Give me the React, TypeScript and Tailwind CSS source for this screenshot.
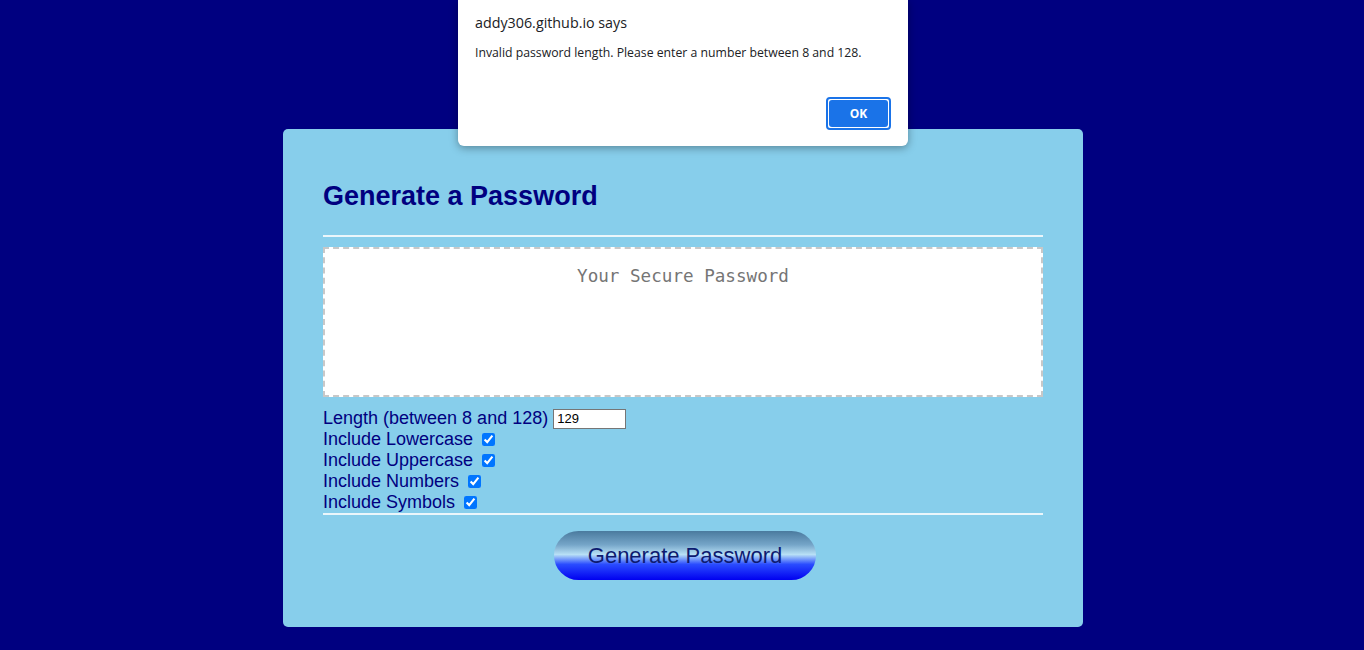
import React from "react";

export default function App() {
  const labels = ["Include Lowercase", "Include Uppercase", "Include Numbers", "Include Symbols"];
  return (
    <div className="relative min-h-[650px] w-full bg-[#000080]" style={{ fontFamily: '"Liberation Sans", Arial, sans-serif' }}>
      <div className="flex justify-center pl-[2px] pt-[129px] pb-[23px]">
        <div className="flex w-[800px] flex-col rounded-[5px] bg-[#87ceeb] px-[40px] pt-[52px] pb-[47px]">
          <h2 className="text-[27px] font-bold leading-[31px] text-[#000080]">Generate a Password</h2>
          <div className="mt-[23px] h-[2px] w-full bg-[#eaf6fb]" />
          <div className="mt-[10px] flex h-[150px] w-full justify-center border-2 border-dashed border-[#c8c8c8] bg-white pt-[16px]">
            <span className="text-[17.6px] leading-[22px] text-[#757575]" style={{ fontFamily: '"DejaVu Sans Mono", "Liberation Mono", monospace' }}>
              Your Secure Password
            </span>
          </div>
          <div className="mt-[11px] flex flex-col text-[18px] leading-[21px] text-[#000080]">
            <div className="flex h-[21px] items-center">
              <span>Length (between 8 and 128)</span>
              <input
                type="text"
                readOnly
                value="129"
                className="ml-[5px] h-[20px] w-[73px] border border-[#767676] bg-white px-[3px] text-[13px] leading-[18px] text-black outline-none"
                style={{ fontFamily: 'Arial, "Liberation Sans", sans-serif' }}
              />
            </div>
            {labels.map((l) => (
              <div key={l} className="flex h-[21px] items-center">
                <span>{l}</span>
                <input type="checkbox" checked readOnly className="ml-[9px] h-[13px] w-[13px] accent-[#0075ff]" />
              </div>
            ))}
          </div>
          <div className="mt-0 h-[2px] w-full bg-[#eaf6fb]" />
          <div className="mt-[16px] flex justify-center pl-[4px]">
            <div
              className="flex h-[49px] w-[262px] items-center justify-center rounded-full text-[22px] text-[#0d1a70]"
              style={{ background: "linear-gradient(to bottom, #4a7a9e 0%, #75a5c8 28%, #b8e0f6 48%, #2a4cff 68%, #0000f0 100%)" }}
            >
              Generate Password
            </div>
          </div>
        </div>
      </div>

      <div
        className="absolute left-[458px] top-0 h-[146px] w-[450px] rounded-b-[6px] bg-white shadow-[0_2px_8px_rgba(0,0,0,0.35)]"
        style={{ fontFamily: '"Open Sans", "Noto Sans", sans-serif' }}
      >
        <div className="flex h-full flex-col px-[17px]">
          <div className="mt-[13px] text-[14.3px] leading-[20px] text-[#202124]">addy306.github.io says</div>
          <div className="mt-[12px] text-[12.25px] leading-[16px] text-[#202124]">
            Invalid password length. Please enter a number between 8 and 128.
          </div>
          <div className="mt-auto mb-[16px] flex justify-end">
            <div className="flex h-[33px] w-[65px] items-center justify-center rounded-[4px] border-2 border-[#1a73e8] p-[1px]">
              <div className="flex h-full w-full items-center justify-center rounded-[3px] bg-[#1a73e8] text-[12px] font-bold text-white">
                OK
              </div>
            </div>
          </div>
        </div>
      </div>
    </div>
  );
}
